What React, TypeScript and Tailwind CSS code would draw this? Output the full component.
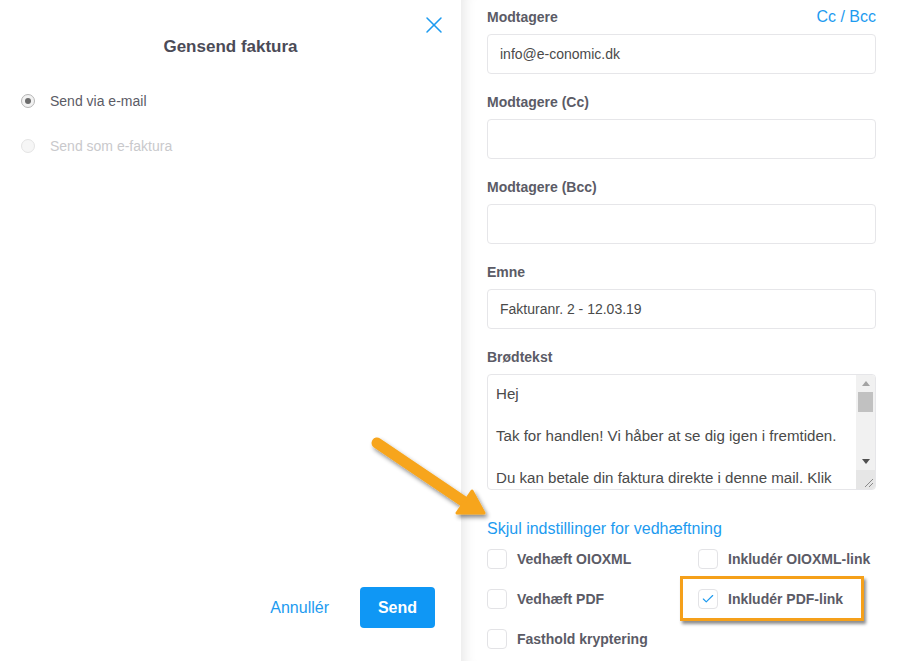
import { X, Check } from "lucide-react";

const font = { fontFamily: '"Liberation Sans", Arial, sans-serif' };

function Field({ label, value, right }: { label: string; value?: string; right?: React.ReactNode }) {
  return (
    <div className="mb-[19px]">
      <div className="mb-2 flex h-[18px] items-center justify-between">
        <span className="text-sm font-bold text-[#5b5b66]">{label}</span>
        {right}
      </div>
      <div className="flex h-10 items-center rounded border border-[#e6e6e9] bg-white px-3 text-sm text-[#4a4a4a]">{value}</div>
    </div>
  );
}

function Box({ label, checked }: { label: string; checked?: boolean }) {
  return (
    <div className="flex h-10 items-center">
      <span className="flex h-5 w-5 items-center justify-center rounded-sm border border-[#e3e3e6] bg-white">
        {checked && <Check className="h-3.5 w-3.5 text-[#1d9bf0]" strokeWidth={2} />}
      </span>
      <span className="ml-[10px] text-sm font-bold text-[#5b5b66]">{label}</span>
    </div>
  );
}

export default function App() {
  return (
    <div className="relative flex h-[661px] w-[900px] overflow-hidden bg-white" style={font}>
      {/* venstre panel */}
      <div className="flex w-[461px] shrink-0 flex-col">
        <div className="flex justify-end pr-[13px] pt-[11px]">
          <X className="h-[28px] w-[28px] text-[#1d9bf0]" strokeWidth={1.3} />
        </div>
        <h1 className="mt-[-5px] text-center text-[17px] font-bold text-[#4b4b57]">Gensend faktura</h1>
        <div className="mt-[31px] flex items-center pl-[21px]">
          <span className="flex h-[14px] w-[14px] items-center justify-center rounded-full border border-[#b5b5b5] bg-[#f2f2f2]">
            <span className="h-[6px] w-[6px] rounded-full bg-[#6b6b6b]" />
          </span>
          <span className="ml-[15px] text-sm text-[#5b5b66]">Send via e-mail</span>
        </div>
        <div className="mt-[25px] flex items-center pl-[21px]">
          <span className="h-[14px] w-[14px] rounded-full border border-[#e4e4e4] bg-[#f6f6f6]" />
          <span className="ml-[15px] text-sm text-[#c9c9cc]">Send som e-faktura</span>
        </div>
        <div className="mt-auto mb-[33px] flex items-center justify-end gap-[31px] pr-[26px]">
          <button className="text-base text-[#1d9bf0]">Annullér</button>
          <button className="h-[41px] w-[75px] rounded bg-[#0f97f5] text-base font-bold text-white">Send</button>
        </div>
      </div>

      {/* højre panel */}
      <div className="flex-1 pl-[26px] pr-[24px] pt-2 shadow-[inset_14px_0_12px_-10px_rgba(0,0,0,0.09)]">
        <Field label="Modtagere" value="info@e-conomic.dk" right={<span className="text-base text-[#1d9bf0]">Cc / Bcc</span>} />
        <Field label="Modtagere (Cc)" />
        <Field label="Modtagere (Bcc)" />
        <Field label="Emne" value="Fakturanr. 2 - 12.03.19" />
        <div className="mb-2 flex h-[18px] items-center">
          <span className="text-sm font-bold text-[#5b5b66]">Brødtekst</span>
        </div>
        <div className="flex h-[116px] overflow-hidden rounded border border-[#e6e6e9]">
          <textarea
            readOnly
            wrap="off"
            className="block h-full min-w-0 flex-1 resize-none overflow-hidden px-[8px] pt-[8px] text-[15.1px] leading-[21px] text-[#4a4a4a] outline-none"
            defaultValue={"Hej\n\nTak for handlen! Vi håber at se dig igen i fremtiden.\n\nDu kan betale din faktura direkte i denne mail. Klik\npå knappen nedenfor.\n\nMed venlig hilsen"}
          />
          {/* rullebjælke */}
          <div className="flex w-[19px] flex-col bg-[#f1f1f1]">
            <div className="flex h-[17px] items-center justify-center">
              <svg width="8" height="5" viewBox="0 0 8 5"><polygon points="4,0 8,5 0,5" fill="#a3a3a3" /></svg>
            </div>
            <div className="mx-[2px] h-[20px] bg-[#c1c1c1]" />
            <div className="flex-1" />
            <div className="flex h-[17px] items-center justify-center">
              <svg width="8" height="5" viewBox="0 0 8 5"><polygon points="0,0 8,0 4,5" fill="#505050" /></svg>
            </div>
            <div className="flex h-[19px] items-end justify-end bg-[#e6e6e6] p-[2px]">
              <svg width="9" height="9" viewBox="0 0 9 9">
                <line x1="1" y1="9" x2="9" y2="1" stroke="#8a8a8a" strokeWidth="1" />
                <line x1="5" y1="9" x2="9" y2="5" stroke="#8a8a8a" strokeWidth="1" />
              </svg>
            </div>
          </div>
        </div>
        <div className="mt-[27px] text-base text-[#1d9bf0]">Skjul indstillinger for vedhæftning</div>
        <div className="mt-[-2px] grid grid-cols-[211px_1fr]">
          <Box label="Vedhæft OIOXML" />
          <Box label="Inkludér OIOXML-link" />
          <Box label="Vedhæft PDF" />
          <Box label="Inkludér PDF-link" checked />
          <Box label="Fasthold kryptering" />
        </div>
      </div>

      {/* markering */}
      <div className="absolute left-[680px] top-[576px] h-[45px] w-[184px] border-[3px] border-[#f5a01a] shadow-[2px_3px_3px_rgba(0,0,0,0.45)]" />
      <svg className="absolute left-[360px] top-[425px]" width="140" height="105" viewBox="0 0 140 105">
        <defs>
          <filter id="sh" x="-20%" y="-20%" width="150%" height="150%">
            <feDropShadow dx="2" dy="3" stdDeviation="2" floodColor="#000" floodOpacity="0.45" />
          </filter>
        </defs>
        <g filter="url(#sh)" fill="#f7a51c" stroke="#f7a51c" strokeLinejoin="round">
          <line x1="17" y1="18" x2="103" y2="76" strokeWidth="11" strokeLinecap="round" />
          <polygon points="112,66 97,88 124,88" strokeWidth="3" />
        </g>
      </svg>
    </div>
  );
}
